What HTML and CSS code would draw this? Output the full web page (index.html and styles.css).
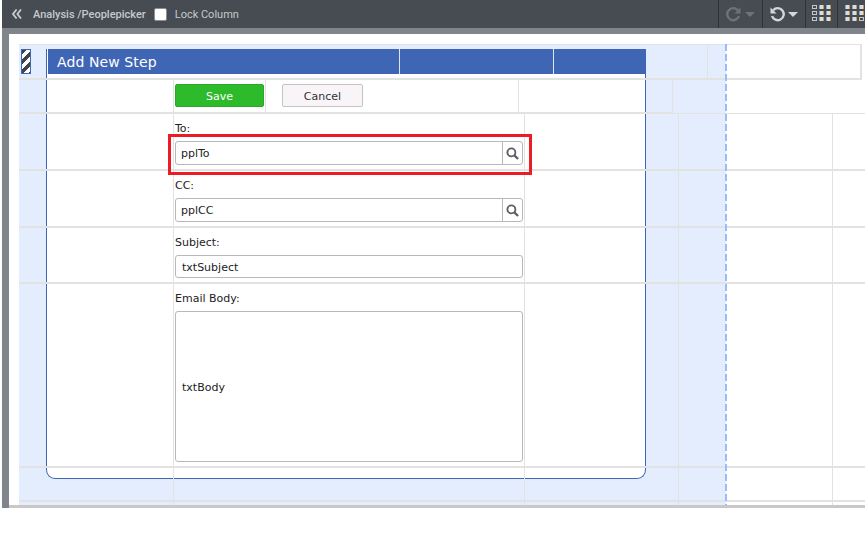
FILE: index.html
```html
<!DOCTYPE html>
<html lang="en">
<head>
<meta charset="utf-8">
<title>Analysis / Peoplepicker</title>
<link rel="stylesheet" href="styles.css">
</head>
<body>
<div class="app">
  <header class="toolbar">
    <svg class="back" width="10" height="10" viewBox="0 0 10 10"><path d="M4.600.5 1 5l3.600 4.500M9 .5 5.400 5 9 9.500" fill="none" stroke="#c9ccd0" stroke-width="1.800"/></svg>
    <span class="crumb">Analysis /Peoplepicker</span>
    <span class="check"></span>
    <span class="crumb lock">Lock Column</span>
    <div class="tools">
      <div class="tool t-redo">
        <svg width="15" height="16" viewBox="0 0 15 16"><path d="M11.800 4.200A6 6 0 1 0 13 10" fill="none" stroke="#6f7377" stroke-width="2.400"/><path d="M14.500 1.500v6h-6z" fill="#6f7377"/></svg>
        <span class="caret dim"></span>
      </div>
      <div class="tool t-undo">
        <svg width="15" height="16" viewBox="0 0 15 16"><path d="M3.200 4.200A6 6 0 1 1 2 10" fill="none" stroke="#d4d6d8" stroke-width="2.400"/><path d="M.5 1.500v6h6z" fill="#d4d6d8"/></svg>
        <span class="caret"></span>
      </div>
      <div class="tool t-grid">
        <div class="dots a"><i></i><i></i><i></i><i></i><i></i><i></i><i></i><i></i><i></i></div>
      </div>
      <div class="tool t-grid2">
        <div class="dots b"><i></i><i></i><i></i><i></i><i></i><i></i><i></i><i></i><i></i></div>
      </div>
    </div>
  </header>
  <div class="stage">
    <main class="canvas">
      <div class="sheet"></div>
      <div class="frame"></div>

      <div class="row r1">
        <div class="c w-handle"><span class="handle"></span></div>
        <div class="titlebar">
          <div class="tcell t1">Add New Step</div>
          <div class="tcell t2"></div>
          <div class="tcell t3"></div>
        </div>
        <div class="c w63"></div>
        <div class="c w154 end"></div>
      </div>

      <div class="row r2">
        <div class="c w154a"></div>
        <div class="c btns"><button class="btn save">Save</button><span class="c-line"></span><button class="btn cancel">Cancel</button></div>
        <div class="c w154"></div>
      </div>

      <div class="row r3">
        <div class="c w154a"></div>
        <div class="c field">
          <label>To:</label>
          <div class="input picker"><span class="val">pplTo</span><span class="search"><svg width="13" height="13" viewBox="0 0 14 14"><circle cx="5.800" cy="5.800" r="4.300" fill="none" stroke="#5b5f66" stroke-width="2"/><path d="m9 9 4 4" stroke="#5b5f66" stroke-width="2.400"/></svg></span></div>
        </div>
        <div class="c w154"></div>
        <div class="c w154"></div>
        <div class="c w154"></div>
      </div>

      <div class="row r4">
        <div class="c w154a"></div>
        <div class="c field">
          <label>CC:</label>
          <div class="input picker"><span class="val">pplCC</span><span class="search"><svg width="13" height="13" viewBox="0 0 14 14"><circle cx="5.800" cy="5.800" r="4.300" fill="none" stroke="#5b5f66" stroke-width="2"/><path d="m9 9 4 4" stroke="#5b5f66" stroke-width="2.400"/></svg></span></div>
        </div>
        <div class="c w154"></div>
        <div class="c w154"></div>
        <div class="c w154"></div>
      </div>

      <div class="row r5">
        <div class="c w154a"></div>
        <div class="c field">
          <label>Subject:</label>
          <div class="input text">txtSubject</div>
        </div>
        <div class="c w154"></div>
        <div class="c w154"></div>
        <div class="c w154"></div>
      </div>

      <div class="row r6">
        <div class="c w154a"></div>
        <div class="c field">
          <label>Email Body:</label>
          <div class="input area">txtBody</div>
        </div>
        <div class="c w154"></div>
        <div class="c w154"></div>
        <div class="c w154"></div>
      </div>

      <div class="row r7">
        <div class="c w154a"></div>
        <div class="c wmid"></div>
        <div class="c w154"></div>
        <div class="c w154"></div>
        <div class="c w154"></div>
      </div>

      <div class="row r8">
        <div class="c w154a"></div>
        <div class="c wmid"></div>
        <div class="c w154"></div>
        <div class="c w154"></div>
        <div class="c w154"></div>
      </div>

      <div class="dash"></div>
      <div class="mark"></div>
    </main>
  </div>
</div>
</body>
</html>
```
FILE: styles.css
```css
* { box-sizing: border-box; }
html, body { margin: 0; padding: 0; background: #fff; }
body { width: 865px; height: 544px; overflow: hidden; font-family: "DejaVu Sans", sans-serif; font-size: 11px; color: #222; }
.app { margin-left: 2px; }

.toolbar { height: 28px; background: #474b52; display: flex; align-items: center; padding-left: 10px; }
.back { flex: none; }
.crumb { font-family: Roboto, sans-serif; font-weight: 500; font-size: 11px; color: #c6c9cd; }
.back + .crumb { margin-left: 11px; }
.check { width: 13px; height: 13px; margin-left: 8px; background: #fff; border: 1px solid #8d9094; border-radius: 2px; }
.lock { margin-left: 8px; font-weight: 400; }
.tools { margin-left: auto; display: flex; height: 28px; }
.tool { display: flex; align-items: center; border-left: 1px solid #2f3237; }
.t-redo { width: 44px; padding-left: 7px; gap: 4px; }
.t-undo { width: 43px; padding-left: 7px; gap: 3px; }
.t-grid { width: 32px; padding-left: 6px; }
.t-grid2 { width: 28px; padding-left: 7px; }
.caret { width: 0; height: 0; border-left: 5px solid transparent; border-right: 5px solid transparent; border-top: 5px solid #d4d6d8; }
.caret.dim { border-top-color: #6f7377; }
.dots { display: grid; grid-template-columns: repeat(3, 5px); grid-auto-rows: 4px; gap: 2px; margin-bottom: 2px; }
.dots i { background: linear-gradient(90deg, #7aa7d8 0 1px, #dcdcdc 1px 4px, #c99a55 4px); }
.dots.a i:nth-child(3n+1), .dots.b i:nth-child(9) { background: #474b52; border: 1px solid #c4c4c4; }

.stage { background: #80858b; padding: 6px 0 0 7px; }
.canvas { position: relative; height: 474px; background: #fff; padding: 10px 0 0 10px; border-bottom: 3px solid #c8c8c8; overflow: hidden; }
.sheet { position: absolute; left: 10px; top: 10px; width: 707px; bottom: 0; background: #e3edfd; }
.frame { position: absolute; left: 37px; top: 15px; width: 600px; height: 430px; background: #fff; border: solid #3f65b5; border-width: 0 1.500px 1.500px; border-radius: 0 0 9px 9px; }

.row { position: relative; display: flex; border-bottom: 2px solid #e2e2e2; }
.c { flex: none; border-right: 1px solid #e2e2e2; }
.r1 { height: 36px; border-top: 1px solid #e2e2e2; width: 843px; border-right: 2px solid #e2e2e2; }
.r2 { height: 34px; width: 654px; }
.r3 { height: 57px; box-shadow: 0 -1px 0 #e2e2e2; }
.r4 { height: 57px; }
.r5 { height: 56px; }
.r6 { height: 184px; }
.r7 { height: 34px; }
.r8 { height: 3px; border-bottom: 0; }
.w154a { width: 155px; }
.w154 { width: 154px; }
.w63 { width: 63px; }
.wmid { width: 351px; }
.w-handle { width: 29px; border-right: 0; padding: 4px 0 0 2px; }
.end { border-right: 0; }
.handle { display: block; width: 10px; height: 25px; border: 1px solid #3f65b5; background: repeating-linear-gradient(135deg, #3f434a 0 3.500px, #fff 3.500px 7px); }

.titlebar { flex: none; width: 597px; height: 25px; margin-top: 4px; display: flex; background: #3f65b5; color: #fff; }
.tcell { border-right: 1px solid #dfe5f2; }
.t1 { width: 352px; font-size: 14px; letter-spacing: .1px; line-height: 26px; padding-left: 9px; }
.t2 { width: 154px; }
.t3 { width: 91px; border-right: 0; }

.btns { width: 345px; padding: 4px 0 0 1px; display: flex; align-items: flex-start; position: relative; }
.c-line { width: 1px; height: 32px; margin: -4px 16px 0 1px; background: #e2e2e2; }
.btn { height: 23px; padding: 1px 0 0; font: 11px "DejaVu Sans", sans-serif; border-radius: 2px; }
.save { width: 89px; background: #2dbb2b; border: 1px solid #2aa928; color: #fff; }
.cancel { width: 81px; background: #f8f4f8; border: 1px solid #c4c4c4; color: #333; }

.field { width: 351px; padding: 8px 0 0 1px; }
.field label { display: block; line-height: 13px; }
.input { display: flex; align-items: center; width: 348px; margin-top: 6px; background: #fff; border: 1px solid #b8b8b8; border-radius: 3px; color: #222; }
.picker { height: 24px; }
.val { flex: 1; padding-left: 5px; }
.search { width: 20px; height: 22px; border-left: 1px solid #b8b8b8; display: flex; align-items: center; justify-content: center; }
.text { height: 23px; padding: 1px 0 0 6px; }
.area { height: 151px; padding: 1px 0 0 6px; }

.dash { position: absolute; left: 716px; top: 10px; bottom: 0; width: 2px; background: repeating-linear-gradient(180deg, #99bbff 0 7px, transparent 7px 10px); }
.mark { position: absolute; left: 159px; top: 100px; width: 364px; height: 41px; border: 3px solid #ed1c24; }
```
